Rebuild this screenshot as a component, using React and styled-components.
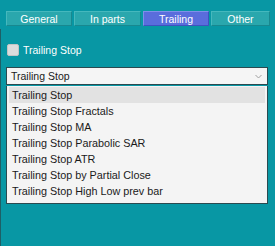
import React from "react";
import styled, { createGlobalStyle } from "styled-components";

const Global = createGlobalStyle`
  html, body { margin: 0; padding: 0; background: #0897a4; }
  body { font-family: "Liberation Sans", Arial, sans-serif; }
`;

const Panel = styled.div`
  width: 275px;
  height: 246px;
  background: #0897a4;
  display: flex;
  flex-direction: column;
`;

const TabBar = styled.div`
  display: grid;
  grid-template-columns: 66px 67px 66px 59px;
  column-gap: 2px;
  padding: 11px 0 0 6px;
  height: 18px;
`;

const Tab = styled.div`
  height: 15px;
  box-sizing: border-box;
  display: flex;
  align-items: center;
  justify-content: center;
  font-size: 10.5px;
  color: #ffffff;
  background: ${(p) => (p.$active ? "#5a6ddc" : "#2aa7ad")};
  border: 1px solid ${(p) => (p.$active ? "#7f8fea" : "#45b8bd")};
  border-bottom-color: ${(p) => (p.$active ? "#3f52bf" : "#18888f")};
  border-right-color: ${(p) => (p.$active ? "#3f52bf" : "#18888f")};
`;

const Body = styled.div`
  flex: 1;
  border-left: 1px solid #1d5f66;
  padding: 14px 7px 0 5px;
  display: flex;
  flex-direction: column;
`;

const CheckRow = styled.label`
  display: flex;
  align-items: center;
  gap: 4px;
  height: 13px;
  padding-left: 1px;
  color: #ffffff;
  font-size: 10.5px;
`;

const Box = styled.span`
  width: 12px;
  height: 12px;
  box-sizing: border-box;
  border-radius: 2px;
  background: #dcdcdc;
  border: 1px solid #c4c4c4;
`;

const Select = styled.div`
  margin-top: 11px;
  height: 18px;
  box-sizing: border-box;
  background: #f5f5f5;
  border: 1px solid #2a4a50;
  display: flex;
  align-items: center;
  justify-content: space-between;
  padding: 0 5px 0 4px;
  font-size: 10.5px;
  color: #1a1a1a;
`;

const List = styled.div`
  margin-top: 1px;
  background: #f4f4f4;
  border: 1px solid #2a4a50;
  border-top: none;
  padding: 1px 2px 4px 2px;
  display: flex;
  flex-direction: column;
`;

const Item = styled.div`
  height: 16px;
  display: flex;
  align-items: center;
  padding-left: 3px;
  font-size: 10.8px;
  color: #1a1a1a;
  background: ${(p) => (p.$hl ? "#e2e2e2" : "transparent")};
`;

const items = [
  "Trailing Stop",
  "Trailing Stop Fractals",
  "Trailing Stop MA",
  "Trailing Stop Parabolic SAR",
  "Trailing Stop ATR",
  "Trailing Stop by Partial Close",
  "Trailing Stop High Low prev bar",
];

export default function App() {
  return (
    <>
      <Global />
      <Panel>
        <TabBar>
          <Tab>General</Tab>
          <Tab>In parts</Tab>
          <Tab $active>Trailing</Tab>
          <Tab>Other</Tab>
        </TabBar>
        <Body>
          <CheckRow>
            <Box />
            Trailing Stop
          </CheckRow>
          <Select>
            <span>Trailing Stop</span>
            <svg width="7" height="5" viewBox="0 0 7 5">
              <path d="M0.5 1 L3.5 4 L6.5 1" fill="none" stroke="#a0a0a0" strokeWidth="1" />
            </svg>
          </Select>
          <List>
            {items.map((t, i) => (
              <Item key={t} $hl={i === 0}>
                {t}
              </Item>
            ))}
          </List>
        </Body>
      </Panel>
    </>
  );
}
